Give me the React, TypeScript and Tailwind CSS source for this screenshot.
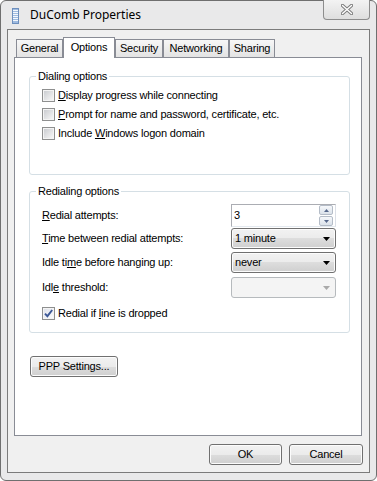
import React from "react";

const dlg = "font-['Liberation_Sans',Arial,sans-serif] text-[11px] leading-[13px] tracking-[-0.2px] text-black";
const btnFace =
  "bg-[linear-gradient(#f2f2f2_0%,#ebebeb_50%,#dddddd_50%,#cfcfcf_100%)] border border-[#707070] rounded-[3px] shadow-[inset_0_0_0_1px_#fcfcfc]";

const Key = ({ children }: { children: React.ReactNode }) => (
  <span className="underline underline-offset-[1px]">{children}</span>
);

const CheckBox = ({ checked = false }: { checked?: boolean }) => (
  <span className="flex h-[13px] w-[13px] shrink-0 border border-[#8e8f8f] bg-[#f4f4f4]">
    <svg width="11" height="11" viewBox="0 0 11 11">
      <defs>
        <linearGradient id={checked ? "cbOn" : "cbOff"} x1="0" y1="0" x2="1" y2="1">
          <stop offset="0" stopColor={checked ? "#dfe2ea" : "#cbcdd1"} />
          <stop offset="1" stopColor={checked ? "#fafbfd" : "#f6f6f6"} />
        </linearGradient>
      </defs>
      <rect x="1" y="1" width="9" height="9" fill={`url(#${checked ? "cbOn" : "cbOff"})`} />
      {checked && (
        <path d="M2 5.6 L4.4 8.2 L9.2 2" fill="none" stroke="#3c5896" strokeWidth="1.9" />
      )}
    </svg>
  </span>
);

const CheckRow = ({ checked, children }: { checked?: boolean; children: React.ReactNode }) => (
  <div className="flex h-[19px] items-center gap-[3px]">
    <CheckBox checked={checked} />
    <span>{children}</span>
  </div>
);

const Group = ({
  title,
  className,
  children,
}: {
  title: string;
  className: string;
  children: React.ReactNode;
}) => (
  <div className={`relative ml-[14px] w-[321px] rounded-[3px] border border-[#d5dfe5] ${className}`}>
    <span className="absolute -top-[8px] left-[6px] bg-white px-[2px] leading-[14px]">{title}</span>
    {children}
  </div>
);

const Arrow = ({ color }: { color: string }) => (
  <svg width="7" height="4" viewBox="0 0 7 4">
    <path d="M0 0 H7 L3.5 4 Z" fill={color} />
  </svg>
);

const Combo = ({ value, disabled = false }: { value?: string; disabled?: boolean }) => (
  <div
    className={`flex h-[21px] w-[105px] items-center justify-between rounded-[3px] border pl-[3px] pr-[5px] ${
      disabled
        ? "border-[#b6babd] bg-[#f4f4f4]"
        : "border-[#707070] bg-[linear-gradient(#f2f2f2_0%,#ebebeb_50%,#dddddd_50%,#cfcfcf_100%)] shadow-[inset_0_0_0_1px_#fcfcfc]"
    }`}
  >
    <span>{value}</span>
    <Arrow color={disabled ? "#a9a9a9" : "#000000"} />
  </div>
);

const SpinButton = ({ up }: { up?: boolean }) => (
  <span className="flex h-[10px] w-[14px] items-center justify-center rounded-[2px] border border-[#b4bcc7] bg-linear-to-b from-[#f6f8fb] to-[#dbe2ea]">
    <svg width="5" height="3" viewBox="0 0 5 3">
      <path d={up ? "M0 3 H5 L2.5 0 Z" : "M0 0 H5 L2.5 3 Z"} fill="#56688c" />
    </svg>
  </span>
);

const Tab = ({ label, width, active = false }: { label: string; width: string; active?: boolean }) => (
  <div
    className={`flex items-center justify-center border border-b-0 border-[#898c95] ${width} ${
      active
        ? "relative z-10 -mb-px h-[21px] bg-white pb-[2px]"
        : "h-[18px] bg-linear-to-b from-[#f7f7f7] to-[#e3e3e3]"
    }`}
  >
    {label}
  </div>
);

export default function App() {
  return (
    <div className="flex h-[481px] w-[377px] flex-col rounded-[6px] border border-[#6f6f6f] bg-[#e9e9ea] px-[6px] pb-[7px]">
      {/* title bar */}
      <div className="flex h-[28px] shrink-0 items-center">
        <svg width="7" height="16" viewBox="0 0 7 16" className="ml-[5px] mt-px">
          <rect x="0.5" y="0.5" width="6" height="15" fill="#9fbbe0" stroke="#6e8fbd" />
          {[2.5, 4.5, 6.5, 8.5, 10.5, 12.5].map((y) => (
            <line key={y} x1="1" x2="6" y1={y} y2={y} stroke="#f4f8fd" strokeWidth="1" />
          ))}
        </svg>
        <span className="ml-[11px] font-['Noto_Sans',sans-serif] text-[12px] leading-[16px] text-black">
          DuComb Properties
        </span>
        <div className="-mt-px ml-auto flex h-[20px] w-[47px] items-center justify-center self-start rounded-b-[4px] border border-t-0 border-[#8d8d8d] bg-linear-to-b from-[#f3f3f3] to-[#dedede]">
          <svg width="12" height="11" viewBox="0 0 12 11">
            <path d="M1.5 1.5 L10.5 9.5 M10.5 1.5 L1.5 9.5" stroke="#7d7d7d" strokeWidth="3.4" strokeLinecap="round" />
            <path d="M1.5 1.5 L10.5 9.5 M10.5 1.5 L1.5 9.5" stroke="#ffffff" strokeWidth="1.4" strokeLinecap="round" />
          </svg>
        </div>
      </div>

      {/* client area */}
      <div className={`flex flex-1 flex-col border border-[#7b7b7b] bg-[#f0f0f0] pt-[7px] ${dlg}`}>
        <div className="ml-[8px] flex h-[20px] items-end">
          <Tab label="General" width="w-[47px]" />
          <Tab label="Options" width="w-[52px]" active />
          <Tab label="Security" width="w-[48px]" />
          <Tab label="Networking" width="w-[66px]" />
          <Tab label="Sharing" width="w-[46px]" />
        </div>

        <div className="ml-[6px] flex h-[379px] w-[348px] flex-col border border-[#898c95] bg-white">
          <Group title="Dialing options" className="mt-[18px] h-[99px] pl-[12px] pt-[9px]">
            <CheckRow>
              <Key>D</Key>isplay progress while connecting
            </CheckRow>
            <CheckRow>
              <Key>P</Key>rompt for name and password, certificate, etc.
            </CheckRow>
            <CheckRow>
              Include <Key>W</Key>indows logon domain
            </CheckRow>
          </Group>

          <Group title="Redialing options" className="mt-[16px] flex h-[142px] flex-col pl-[12px] pr-[13px]">
            <div className="mt-[12px] flex h-[23px] items-center justify-between">
              <span>
                <Key>R</Key>edial attempts:
              </span>
              <div className="flex h-[23px] w-[105px] items-center justify-between border border-[#abadb3] border-b-[#e3e9ef] border-r-[#dbdfe6] bg-white pl-[2px] pr-[2px]">
                <span>3</span>
                <div className="flex flex-col gap-px">
                  <SpinButton up />
                  <SpinButton />
                </div>
              </div>
            </div>
            <div className="mt-px flex h-[21px] items-center justify-between">
              <span>
                <Key>T</Key>ime between redial attempts:
              </span>
              <Combo value="1 minute" />
            </div>
            <div className="mt-[3px] flex h-[21px] items-center justify-between">
              <span>
                Idle ti<Key>m</Key>e before hanging up:
              </span>
              <Combo value="never" />
            </div>
            <div className="mt-[4px] flex h-[21px] items-center justify-between">
              <span>
                Idl<Key>e</Key> threshold:
              </span>
              <Combo disabled />
            </div>
            <div className="mt-[6px]">
              <CheckRow checked>
                Redial if <Key>l</Key>ine is dropped
              </CheckRow>
            </div>
          </Group>

          <button
            type="button"
            className={`ml-[15px] mt-[23px] flex h-[21px] w-[88px] items-center justify-center ${btnFace}`}
          >
            PPP Settin<Key>g</Key>s...
          </button>
        </div>

        <div className="mr-[6px] mt-[8px] flex justify-end gap-[7px]">
          <button type="button" className={`flex h-[21px] w-[73px] items-center justify-center ${btnFace}`}>
            OK
          </button>
          <button type="button" className={`flex h-[21px] w-[74px] items-center justify-center ${btnFace}`}>
            Cancel
          </button>
        </div>
      </div>
    </div>
  );
}
